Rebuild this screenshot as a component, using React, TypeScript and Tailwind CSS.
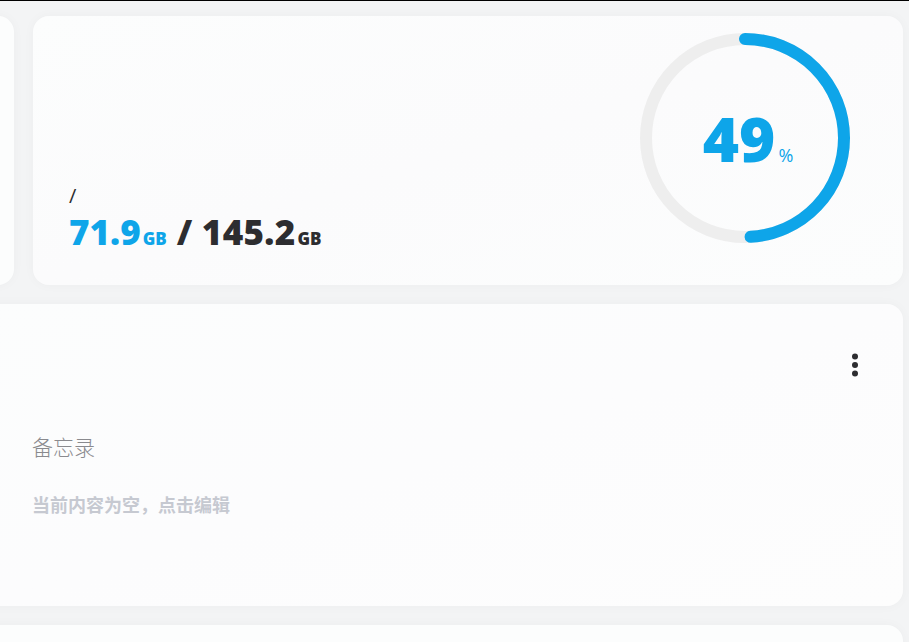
const ring = 2 * Math.PI * 99;

export default function App() {
  const used = 49;
  const dash = (used / 100) * ring;

  return (
    <div
      className="h-[642px] w-[909px] overflow-hidden border-t border-black bg-[#f3f4f5] pr-[6px] pt-[15px]"
      style={{ fontFamily: '"Open Sans", "Noto Sans", "Noto Sans CJK SC", sans-serif' }}
    >
      {/* Row 1: storage */}
      <div className="flex h-[269px] gap-[19px]">
        <div className="-ml-[186px] w-[200px] shrink-0 rounded-2xl bg-[#fcfdfd] shadow-[0_0_12px_rgba(0,0,0,0.03)]" />
        <div className="flex flex-1 items-start justify-between rounded-2xl bg-gradient-to-br from-[#fcfdfd] via-[#fbfbfc] to-[#fcfdfd] pl-[36px] pr-[52px] shadow-[0_0_12px_rgba(0,0,0,0.03)]">
          <div className="flex h-full flex-col justify-end pb-[36px]">
            <div className="text-[20px] leading-6 text-[#2d2d30]">/</div>
            <div className="mt-[6px] flex items-baseline font-extrabold leading-none">
              <span className="text-[35px] text-[#0ea5e9]">71.9</span>
              <span className="ml-[2px] text-[17px] text-[#0ea5e9]">GB</span>
              <span className="ml-[10px] text-[35px] tracking-[0.3px] text-[#2d2d30]">/ 145.2</span>
              <span className="ml-[2px] text-[17px] text-[#2d2d30]">GB</span>
            </div>
          </div>
          <div className="relative mt-[16px] h-[212px] w-[212px]">
            <svg width="212" height="212" viewBox="0 0 212 212" className="-rotate-90">
              <circle cx="106" cy="106" r="99" stroke="#eeeeee" strokeWidth="12" fill="none" />
              <circle
                cx="106"
                cy="106"
                r="99"
                stroke="#0ea5e9"
                strokeWidth="12"
                fill="none"
                strokeLinecap="round"
                strokeDasharray={`${dash} ${ring}`}
              />
            </svg>
            <div className="absolute inset-0 flex items-center justify-center">
              <div className="flex items-baseline pl-[6px] text-[#0ea5e9]">
                <span className="text-[62px] font-extrabold leading-none">{used}</span>
                <span className="ml-[3px] text-[18px]">%</span>
              </div>
            </div>
          </div>
        </div>
      </div>

      {/* Row 2: memo */}
      <div className="-ml-5 mt-[19px] flex h-[302px] flex-col rounded-2xl bg-gradient-to-br from-[#fcfdfd] via-[#fcfcfd] to-[#fdfdfd] pl-[52px] pr-[42px] shadow-[0_0_12px_rgba(0,0,0,0.03)]">
        <div className="flex justify-end pt-[49px]">
          <svg width="12" height="24" viewBox="0 0 12 24" fill="#2d2d30">
            <circle cx="6" cy="3.5" r="3" />
            <circle cx="6" cy="12" r="3" />
            <circle cx="6" cy="20.5" r="3" />
          </svg>
        </div>
        <div
          className="mt-[55px] text-[21px] font-light leading-7 text-[#8a8a8e]"
          style={{ fontFamily: '"Noto Sans CJK SC", sans-serif' }}
        >
          备忘录
        </div>
        <div
          className="mt-[32px] text-[18px] font-bold leading-6 text-[#c6c9d1]"
          style={{ fontFamily: '"Noto Sans CJK SC", sans-serif' }}
        >
          当前内容为空，点击编辑
        </div>
      </div>

      {/* Row 3 */}
      <div className="-ml-5 mt-[19px] h-[200px] rounded-2xl bg-[#fcfdfd] shadow-[0_0_12px_rgba(0,0,0,0.03)]" />
    </div>
  );
}
